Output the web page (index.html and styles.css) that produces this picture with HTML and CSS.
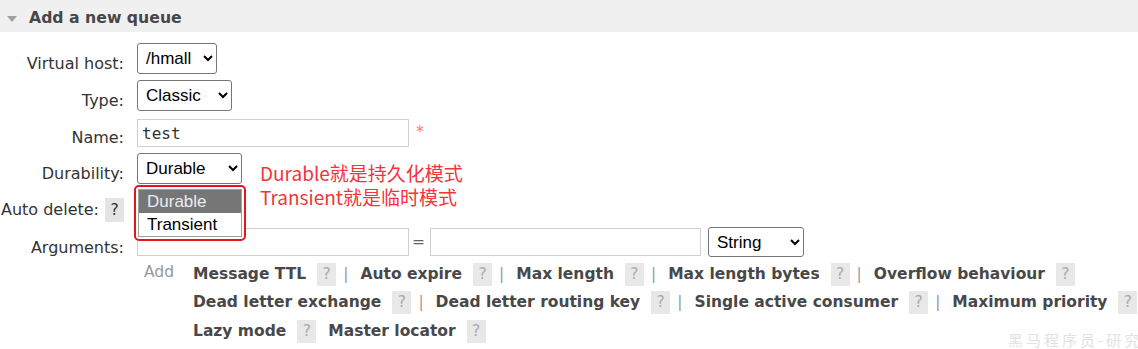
FILE: index.html
```html
<!DOCTYPE html>
<html lang="en">
<head>
  <meta charset="UTF-8">
  <meta name="viewport" content="width=device-width, initial-scale=1.0">
  <title>Add a new queue</title>
  <link rel="stylesheet" href="styles.css">
</head>
<body>
  <div class="section">
    <h2 class="section-title"><span class="toggle"></span>Add a new queue</h2>

    <table class="form">
      <tr>
        <th><label for="vhost">Virtual host:</label></th>
        <td><select id="vhost" class="sel sel-vhost"><option>/hmall</option></select></td>
      </tr>
      <tr>
        <th><label for="qtype">Type:</label></th>
        <td><select id="qtype" class="sel sel-type"><option>Classic</option></select></td>
      </tr>
      <tr>
        <th><label for="qname">Name:</label></th>
        <td>
          <div class="field">
            <input type="text" id="qname" class="text name-input" value="test">
            <span class="mand">*</span>
          </div>
        </td>
      </tr>
      <tr>
        <th><label for="durable">Durability:</label></th>
        <td>
          <div class="field durability">
            <select id="durable" class="sel sel-durable"><option>Durable</option><option>Transient</option></select>

            <!-- open dropdown, circled in red -->
            <div class="dropdown">
              <div class="dropdown-list">
                <div class="opt opt-active">Durable</div>
                <div class="opt">Transient</div>
              </div>
            </div>

            <div class="note">
              Durable就是持久化模式<br>
              Transient就是临时模式
            </div>
          </div>
        </td>
      </tr>
      <tr class="row-auto">
        <th><label for="autodel">Auto delete:</label><span class="help help-dark">?</span></th>
        <td><select id="autodel" class="sel sel-vhost"><option>No</option></select></td>
      </tr>
      <tr>
        <th><label>Arguments:</label></th>
        <td>
          <div class="arg-row">
            <input type="text" class="text arg-input">
            <span class="eq">=</span>
            <input type="text" class="text arg-input arg-val">
            <select class="sel sel-string"><option>String</option></select>
          </div>
          <div class="arg-extra">
            <span class="add">Add</span>
            <div class="links">
              <div class="line">
                <span class="link">Message TTL</span><span class="help">?</span><span class="sep">|</span><span class="link">Auto expire</span><span class="help">?</span><span class="sep">|</span><span class="link">Max length</span><span class="help">?</span><span class="sep">|</span><span class="link">Max length bytes</span><span class="help">?</span><span class="sep">|</span><span class="link">Overflow behaviour</span><span class="help">?</span>
              </div>
              <div class="line">
                <span class="link">Dead letter exchange</span><span class="help">?</span><span class="sep">|</span><span class="link">Dead letter routing key</span><span class="help">?</span><span class="sep">|</span><span class="link">Single active consumer</span><span class="help">?</span><span class="sep">|</span><span class="link">Maximum priority</span><span class="help">?</span>
              </div>
              <div class="line">
                <span class="link">Lazy mode</span><span class="help">?</span><span class="link link-gap">Master locator</span><span class="help">?</span>
              </div>
            </div>
          </div>
        </td>
      </tr>
    </table>

    <div class="watermark">黑马程序员-研究</div>
  </div>
</body>
</html>
```

FILE: styles.css
```css
body {
  margin: 0;
  font-family: "DejaVu Sans", Verdana, sans-serif;
  font-size: 15.5px;
  color: #333;
  background-color: #fff;
  overflow: hidden;
}
.section {
  position: relative;
  height: 349px;
}
.section-title {
  margin: 0;
  height: 29px;
  padding: 3px 0 0 7px;
  line-height: 29px;
  font-size: 15.7px;
  font-weight: bold;
  color: #474747;
  background-color: #f0f0f0;
}
.toggle {
  display: inline-block;
  width: 0;
  height: 0;
  margin-right: 12px;
  border-left: 5px solid transparent;
  border-right: 5px solid transparent;
  border-top: 6px solid #a0a0a0;
  vertical-align: middle;
}

/* form table */
.form {
  margin-top: 8px;
  border-collapse: collapse;
  border-spacing: 0;
}
.form th {
  width: 124px;
  padding: 14px 13px 0 0;
  text-align: right;
  font-size: 16px;
  font-weight: normal;
  white-space: nowrap;
  vertical-align: top;
  color: #333;
}
.form td {
  padding: 3px 0;
  vertical-align: top;
}
.row-auto th {
  padding-top: 11px;
}
.field {
  display: flex;
  align-items: flex-start;
}
.durability {
  position: relative;
}

.sel {
  display: block;
  box-sizing: border-box;
  height: 31px;
  padding: 0 4px;
  font-family: "Liberation Sans", Arial, sans-serif;
  font-size: 17px;
  color: #000;
  background-color: #fff;
  border: 1px solid #767676;
  border-radius: 3px;
}
.sel-vhost { width: 80px; }
.sel-type { width: 95px; }
.sel-durable { width: 105px; }
.sel-string {
  width: 96px;
  height: 30px;
  margin-left: 7px;
}

.text {
  box-sizing: border-box;
  height: 28px;
  padding: 0 4px;
  border: 1px solid #d0d0d0;
  background-color: #fff;
  color: #333;
}
.name-input {
  width: 272px;
  margin-top: 2px;
  font-family: "DejaVu Sans Mono", monospace;
  font-size: 16px;
}
.mand {
  margin: 6px 0 0 7px;
  color: #f77;
}

/* opened select list */
.dropdown {
  position: absolute;
  left: -3px;
  top: 32px;
  box-sizing: border-box;
  width: 112px;
  height: 56px;
  padding: 2px;
  border: 2px solid #e8141c;
  border-radius: 5px;
  background-color: #fff;
}
.dropdown-list {
  border: 1px solid #a0a0a0;
  background-color: #fff;
}
.opt {
  height: 23px;
  line-height: 23px;
  padding-left: 8px;
  font-family: "Liberation Sans", Arial, sans-serif;
  font-size: 17px;
  color: #000;
}
.opt-active {
  background-color: #767676;
  color: #e8ecf4;
}

.note {
  position: absolute;
  left: 123px;
  top: 8px;
  font-family: "Noto Sans CJK SC", sans-serif;
  font-size: 19px;
  line-height: 24px;
  color: #f5333b;
  white-space: nowrap;
}

/* arguments */
.arg-row {
  display: flex;
  align-items: center;
}
.arg-input {
  width: 272px;
}
.arg-val {
  width: 271px;
}
.eq {
  margin: 0 5px 0 3px;
  color: #666;
}
.arg-extra {
  display: flex;
  align-items: flex-start;
  margin-top: 3px;
}
.add {
  flex: 0 0 49px;
  margin-left: 7px;
  line-height: 24px;
  color: #999;
}
.links {
  line-height: 28.4px;
  font-weight: bold;
  color: #484848;
  white-space: nowrap;
}
.help {
  display: inline-block;
  width: 19px;
  height: 23px;
  margin-left: 11px;
  line-height: 23px;
  text-align: center;
  font-size: 15.5px;
  font-weight: normal;
  color: #aaa;
  background-color: #e8e8e8;
}
.help-dark {
  height: 24px;
  line-height: 24px;
  margin-left: 6px;
  color: #333;
  background-color: #e4e4e4;
}
.sep {
  margin: 0 12px 0 7px;
  font-weight: normal;
  color: #999;
}
.link-gap {
  margin-left: 12px;
}

.watermark {
  position: absolute;
  left: 1008px;
  top: 330px;
  font-family: "Noto Sans CJK SC", sans-serif;
  font-size: 15px;
  line-height: 20px;
  letter-spacing: 3px;
  color: #e2e2e2;
  white-space: nowrap;
}
```
